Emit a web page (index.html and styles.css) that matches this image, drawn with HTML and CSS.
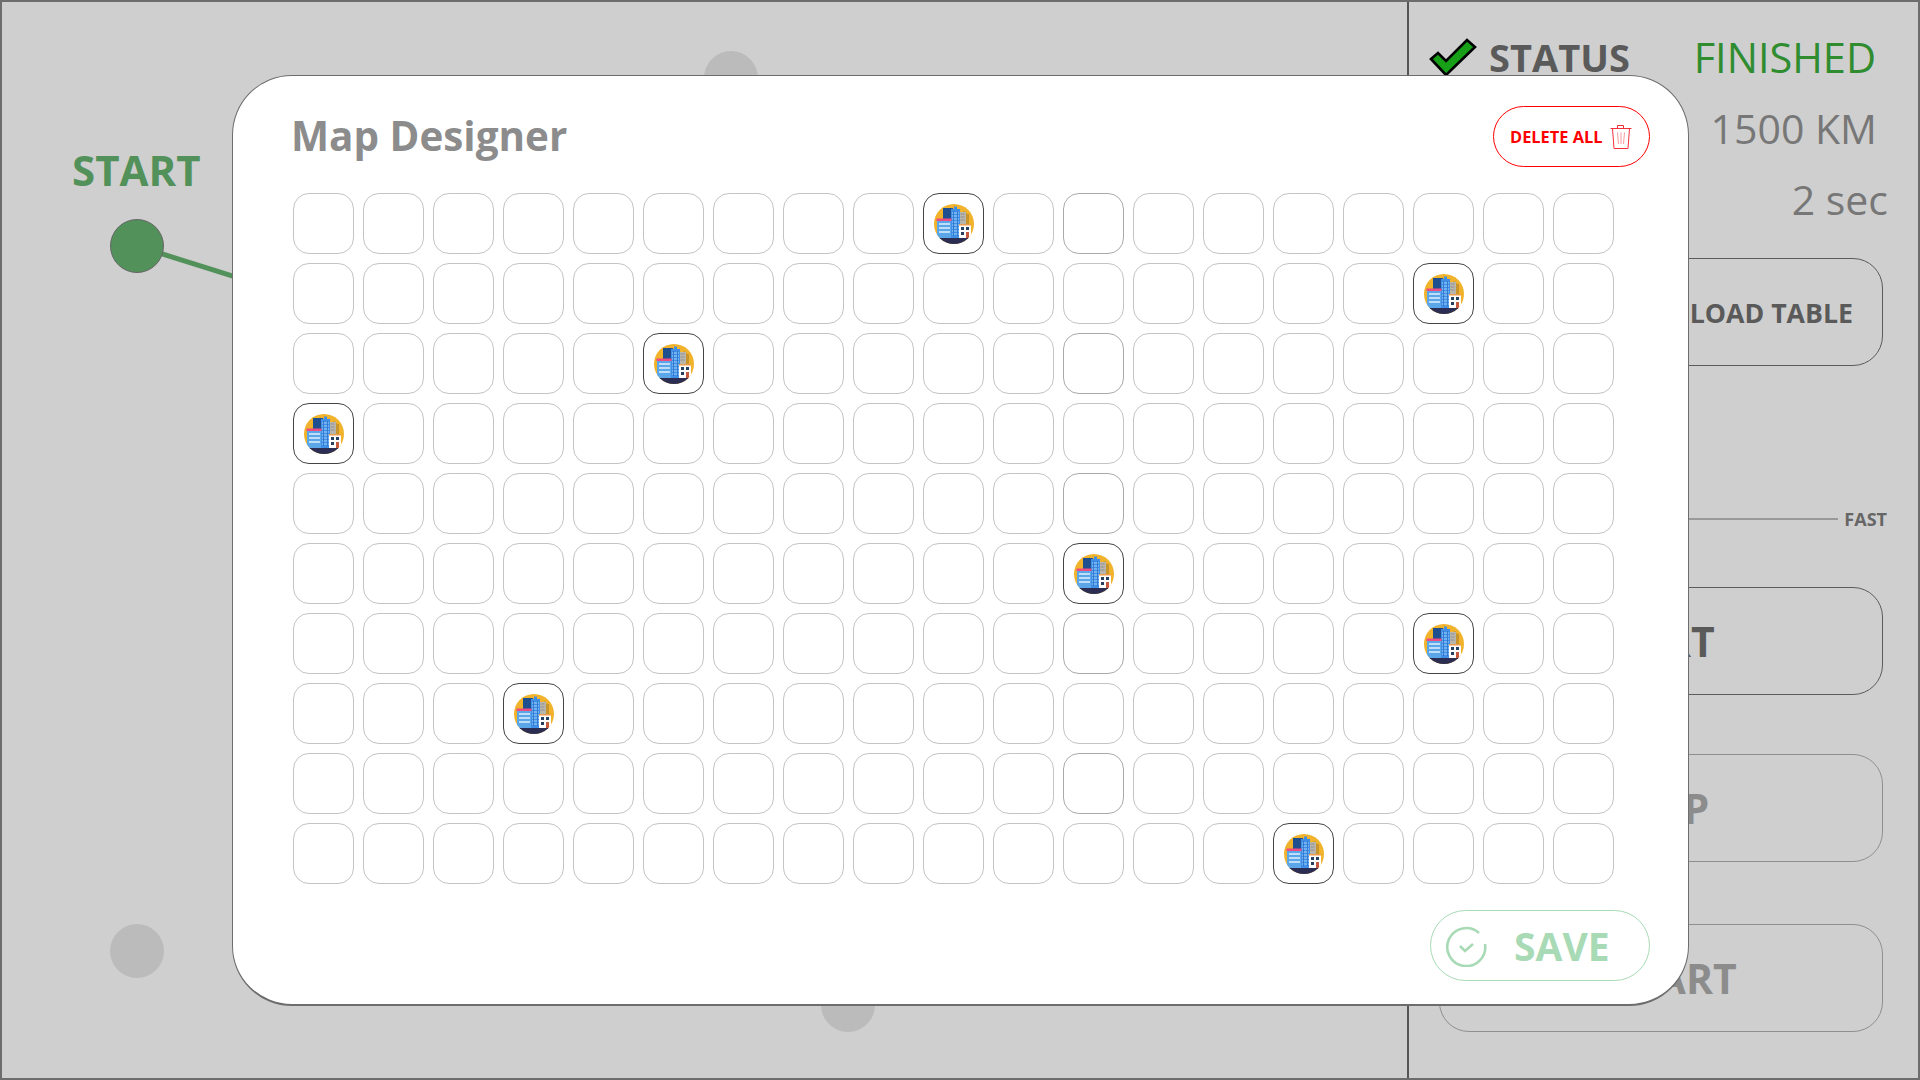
FILE: index.html
```html
<!DOCTYPE html>
<html lang="en">
<head>
<meta charset="utf-8">
<title>Map Designer</title>
<link rel="stylesheet" href="styles.css">
</head>
<body>
<svg class="defs" width="0" height="0" aria-hidden="true">
  <defs>
    <clipPath id="disc"><circle cx="20" cy="20" r="20"/></clipPath>
    <symbol id="city" viewBox="0 0 40 40">
      <g clip-path="url(#disc)">
        <rect width="40" height="40" fill="#f1b32b"/>
        <path d="M27 35V9l4-2 2 3h2v25z" fill="#c8952c"/>
        <rect x="9" y="4" width="10" height="18" fill="#1f4f8f"/>
        <rect x="25" y="8" width="7" height="14" fill="#b9b6ad"/>
        <path d="M26.500 10h4M26.500 13h4M26.500 16h4" stroke="#8f8f8f" stroke-width="1"/>
        <rect x="17" y="5" width="9" height="30" fill="#3f8fe8"/>
        <path d="M20 2.500h3V5h-3z" fill="#3f8fe8"/>
        <path d="M18 9h7M18 12h7M18 15h7M18 18h7M18 21h7M18 24h7M18 27h7M18 30h7" stroke="#a5d4fa" stroke-width="1"/>
        <path d="M19.500 7v25M23.500 7v25" stroke="#2a6fc4" stroke-width=".8"/>
        <rect x="3" y="16" width="14" height="19" fill="#5aa6e8"/>
        <rect x="2.500" y="14.500" width="15" height="2.500" fill="#ef4d7f"/>
        <path d="M5 20h11M5 24h11M5 28h11" stroke="#dff0fd" stroke-width="1.600"/>
        <rect x="25" y="21" width="12" height="14" fill="#fff"/>
        <rect x="25" y="20" width="12" height="1.500" fill="#ee9a4d"/>
        <path d="M27 23h3v3h-3zM32 23h3v3h-3zM27 28h3v3h-3z" fill="#27405f"/>
        <rect x="32" y="28" width="3" height="7" fill="#c4583c"/>
        <rect y="34" width="40" height="6" fill="#2b2d52"/>
      </g>
    </symbol>
  </defs>
</svg>

<div class="app">
  <main class="map">
    <div class="start-label">START</div>
    <svg class="edges" width="1404" height="1076" aria-hidden="true">
      <line x1="135" y1="244" x2="418" y2="333" class="edge"/>
    </svg>
    <span class="node node-start"></span>
    <span class="node node-top"></span>
    <span class="node node-bottom"></span>
    <span class="node node-left"></span>
  </main>

  <aside class="side">
    <div class="stat-row stat-status">
      <div class="status-head">
        <svg class="check" width="48" height="38" viewBox="0 0 48 38" aria-hidden="true">
          <path d="M2 21 9 15 17 23 38 2 46 9 17 37Z" fill="#17a017" stroke="#000" stroke-width="2.600" stroke-linejoin="miter"/>
        </svg>
        <span class="status-label">STATUS</span>
      </div>
      <span class="status-value">FINISHED</span>
    </div>
    <div class="stat-row stat-dist">1500 KM</div>
    <div class="stat-row stat-time">2 sec</div>
    <button class="btn btn-load">LOAD TABLE</button>
    <div class="speed">
      <span class="speed-track"></span>
      <span class="speed-label">FAST</span>
    </div>
    <button class="btn btn-big btn-start">START</button>
    <button class="btn btn-big btn-faded btn-stop">STOP</button>
    <button class="btn btn-big btn-faded btn-restart">RESTART</button>
  </aside>
</div>

<section class="modal">
  <header class="modal-head">
    <h1 class="modal-title">Map Designer</h1>
    <button class="delete-btn">
      <span>DELETE ALL</span>
      <svg width="22" height="25" viewBox="0 0 22 25" fill="none" stroke="#f4303a" stroke-width="1" aria-hidden="true">
        <path d="M.5 4.500h21M7.500 4.500V1.500h6v3M2.500 4.500 4 24.500h14l1.500-20"/>
        <path d="M7.500 8.500 8.500 20M11 8.500V20M14.500 8.500 13.500 20" stroke="#f89aa0"/>
      </svg>
    </button>
  </header>

  <div class="grid">
    <div class="cell"></div><div class="cell"></div><div class="cell"></div><div class="cell"></div><div class="cell"></div><div class="cell"></div><div class="cell"></div><div class="cell"></div><div class="cell"></div><div class="cell filled"><svg class="city"><use href="#city"/></svg></div><div class="cell"></div><div class="cell dim"></div><div class="cell"></div><div class="cell"></div><div class="cell"></div><div class="cell"></div><div class="cell"></div><div class="cell"></div><div class="cell"></div>
    <div class="cell"></div><div class="cell"></div><div class="cell"></div><div class="cell"></div><div class="cell"></div><div class="cell"></div><div class="cell"></div><div class="cell"></div><div class="cell"></div><div class="cell"></div><div class="cell"></div><div class="cell"></div><div class="cell"></div><div class="cell"></div><div class="cell"></div><div class="cell"></div><div class="cell filled"><svg class="city"><use href="#city"/></svg></div><div class="cell"></div><div class="cell"></div>
    <div class="cell"></div><div class="cell"></div><div class="cell"></div><div class="cell"></div><div class="cell"></div><div class="cell filled"><svg class="city"><use href="#city"/></svg></div><div class="cell"></div><div class="cell"></div><div class="cell"></div><div class="cell"></div><div class="cell"></div><div class="cell dim"></div><div class="cell"></div><div class="cell"></div><div class="cell"></div><div class="cell"></div><div class="cell"></div><div class="cell"></div><div class="cell"></div>
    <div class="cell filled"><svg class="city"><use href="#city"/></svg></div><div class="cell"></div><div class="cell"></div><div class="cell"></div><div class="cell"></div><div class="cell"></div><div class="cell"></div><div class="cell"></div><div class="cell"></div><div class="cell"></div><div class="cell"></div><div class="cell"></div><div class="cell"></div><div class="cell"></div><div class="cell"></div><div class="cell"></div><div class="cell"></div><div class="cell"></div><div class="cell"></div>
    <div class="cell"></div><div class="cell"></div><div class="cell"></div><div class="cell"></div><div class="cell"></div><div class="cell"></div><div class="cell"></div><div class="cell"></div><div class="cell"></div><div class="cell"></div><div class="cell"></div><div class="cell dim"></div><div class="cell"></div><div class="cell"></div><div class="cell"></div><div class="cell"></div><div class="cell"></div><div class="cell"></div><div class="cell"></div>
    <div class="cell"></div><div class="cell"></div><div class="cell"></div><div class="cell"></div><div class="cell"></div><div class="cell"></div><div class="cell"></div><div class="cell"></div><div class="cell"></div><div class="cell"></div><div class="cell"></div><div class="cell filled"><svg class="city"><use href="#city"/></svg></div><div class="cell"></div><div class="cell"></div><div class="cell"></div><div class="cell"></div><div class="cell"></div><div class="cell"></div><div class="cell"></div>
    <div class="cell"></div><div class="cell"></div><div class="cell"></div><div class="cell"></div><div class="cell"></div><div class="cell"></div><div class="cell"></div><div class="cell"></div><div class="cell"></div><div class="cell"></div><div class="cell"></div><div class="cell dim"></div><div class="cell"></div><div class="cell"></div><div class="cell"></div><div class="cell"></div><div class="cell filled"><svg class="city"><use href="#city"/></svg></div><div class="cell"></div><div class="cell"></div>
    <div class="cell"></div><div class="cell"></div><div class="cell"></div><div class="cell filled"><svg class="city"><use href="#city"/></svg></div><div class="cell"></div><div class="cell"></div><div class="cell"></div><div class="cell"></div><div class="cell"></div><div class="cell"></div><div class="cell"></div><div class="cell"></div><div class="cell"></div><div class="cell"></div><div class="cell"></div><div class="cell"></div><div class="cell"></div><div class="cell"></div><div class="cell"></div>
    <div class="cell"></div><div class="cell"></div><div class="cell"></div><div class="cell"></div><div class="cell"></div><div class="cell"></div><div class="cell"></div><div class="cell"></div><div class="cell"></div><div class="cell"></div><div class="cell"></div><div class="cell dim"></div><div class="cell"></div><div class="cell"></div><div class="cell"></div><div class="cell"></div><div class="cell"></div><div class="cell"></div><div class="cell"></div>
    <div class="cell"></div><div class="cell"></div><div class="cell"></div><div class="cell"></div><div class="cell"></div><div class="cell"></div><div class="cell"></div><div class="cell"></div><div class="cell"></div><div class="cell"></div><div class="cell"></div><div class="cell"></div><div class="cell"></div><div class="cell"></div><div class="cell filled"><svg class="city"><use href="#city"/></svg></div><div class="cell"></div><div class="cell"></div><div class="cell"></div><div class="cell"></div>
  </div>

  <footer class="modal-foot">
    <button class="save-btn">
      <svg width="42" height="42" viewBox="0 0 42 42" fill="none" stroke="#a8dab6" aria-hidden="true">
        <path d="M34 8A19 19 0 1 0 40 19" stroke-width="2.600"/>
        <path d="M15 21l5 5 8-7" stroke-width="2.600"/>
      </svg>
      <span>SAVE</span>
    </button>
  </footer>
</section>
</body>
</html>
```
FILE: styles.css
```css
* { box-sizing: border-box; }

html, body {
  margin: 0;
  height: 100%;
  overflow: hidden;
}

body {
  background: #cfcfcf;
  font-family: "Open Sans", "Noto Sans", "Liberation Sans", sans-serif;
}

.defs { position: absolute; }

.app {
  display: flex;
  width: 1920px;
  height: 1080px;
  border: 2px solid #6d6d6d;
  background: #cfcfcf;
}

/* Map canvas */
.map {
  position: relative;
  flex: 0 0 1407px;
  border-right: 2px solid #555;
}

.edges {
  position: absolute;
  left: 0;
  top: 0;
}

.edge {
  stroke: #52915a;
  stroke-width: 5;
}

.start-label {
  position: absolute;
  left: 70px;
  top: 139px;
  font-size: 42px;
  line-height: 58px;
  font-weight: 700;
  color: #52915a;
}

.node {
  position: absolute;
  width: 54px;
  height: 54px;
  border-radius: 50%;
  background: #bbb;
}

.node-start {
  left: 108px;
  top: 217px;
  background: #52915a;
  border: 1px solid #666;
}
.node-top { left: 702px; top: 49px; }
.node-bottom { left: 819px; top: 976px; }
.node-left { left: 108px; top: 922px; }

/* Side panel */
.side {
  flex: 1;
  padding: 0 0 0 30px;
  color: #5a5a5a;
}

.stat-row {
  display: flex;
  justify-content: flex-end;
  white-space: nowrap;
}

.stat-status {
  justify-content: space-between;
  align-items: center;
  height: 54px;
  margin-top: 28px;
  margin-left: -10px;
  margin-right: 42px;
}

.status-head {
  display: flex;
  align-items: center;
  gap: 12px;
}

.check { flex: none; }

.status-label {
  font-size: 38px;
  line-height: 54px;
  font-weight: 700;
  color: #5a5a5a;
}

.status-value {
  font-size: 41.500px;
  line-height: 54px;
  color: #2f8c2f;
}

.stat-dist {
  height: 72px;
  margin-top: 8px;
  margin-right: 41px;
  font-size: 41px;
  line-height: 72px;
  color: #777;
}

.stat-time {
  height: 72px;
  margin-top: -1px;
  margin-right: 30px;
  font-size: 41px;
  line-height: 72px;
  color: #777;
}

.btn {
  display: flex;
  align-items: center;
  justify-content: center;
  width: 444px;
  height: 108px;
  padding: 0;
  background: transparent;
  border: 1px solid #5c5c5c;
  border-radius: 30px;
  font-family: inherit;
  font-weight: 700;
  color: #5a5a5a;
}

.btn-load {
  justify-content: flex-end;
  margin-top: 23px;
  padding-right: 29px;
  font-size: 26.700px;
}

.speed {
  display: flex;
  align-items: center;
  gap: 6px;
  height: 24px;
  margin-top: 141px;
  margin-left: -30px;
  margin-right: 31px;
}

.speed-track {
  flex: 1;
  height: 2px;
  background: #999;
}

.speed-label {
  font-size: 18px;
  line-height: 24px;
  font-weight: 700;
  color: #666;
}

.btn-big { font-size: 41px; }
.btn-start {
  margin-top: 56px;
  padding-right: 18px;
}

.btn-faded {
  border-color: #8f8f8f;
  color: #8c8c8c;
}
.btn-stop {
  margin-top: 59px;
  padding-right: 8px;
}
.btn-restart {
  margin-top: 62px;
  padding-right: 24px;
}

/* Modal */
.modal {
  position: absolute;
  left: 232px;
  top: 75px;
  width: 1457px;
  height: 931px;
  padding: 0 38px 0 60px;
  background: #fff;
  border: 2px solid #6d6d6d;
  border-width: 1px 1px 2px 1px;
  border-radius: 60px;
}

.modal-head {
  display: flex;
  align-items: center;
  justify-content: space-between;
  height: 117px;
  padding-top: 3px;
}

.modal-title {
  margin: 0 0 0 -2px;
  font-size: 40.400px;
  line-height: 60px;
  font-weight: 700;
  color: #8c8c8c;
}

.delete-btn {
  display: flex;
  align-items: center;
  gap: 7px;
  width: 157px;
  height: 61px;
  padding: 0 0 0 16px;
  background: #fff;
  border: 1px solid #f00;
  border-radius: 31px;
  font-family: inherit;
  font-size: 16.400px;
  font-weight: 700;
  color: #f00;
  white-space: nowrap;
}

.grid {
  display: grid;
  grid-template-columns: repeat(19, 61px);
  grid-auto-rows: 61px;
  gap: 9px;
}

.cell {
  display: flex;
  align-items: center;
  justify-content: center;
  border: 1px solid #c4c4c4;
  border-radius: 16px;
}

.cell.dim { border-color: #aaa; }
.cell.filled { border-color: #444; }

.city {
  width: 40px;
  height: 40px;
}

.modal-foot {
  display: flex;
  justify-content: flex-end;
  margin-top: 26px;
}

.save-btn {
  display: flex;
  align-items: center;
  gap: 27px;
  width: 220px;
  height: 71px;
  padding: 0 0 0 14px;
  background: #fff;
  border: 1px solid #a8dab6;
  border-radius: 36px;
  font-family: inherit;
  font-size: 39px;
  font-weight: 700;
  color: #a8dab6;
}
```
